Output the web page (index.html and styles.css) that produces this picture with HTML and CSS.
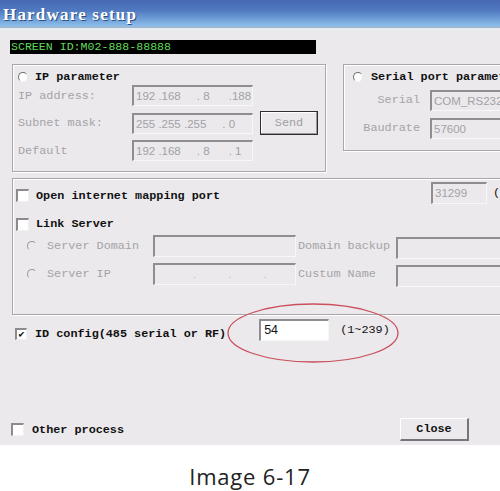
FILE: index.html
```html
<!DOCTYPE html>
<html lang="en">
<head>
    <meta charset="UTF-8">
    <meta name="viewport" content="width=device-width, initial-scale=1.0">
    <title>Hardware setup</title>
    <link rel="stylesheet" href="styles.css">
</head>
<body>
    <div class="window">
        <div class="titlebar">Hardware setup</div>

        <div class="screen-id">SCREEN ID:M02-888-88888</div>

        <!-- IP / serial section -->
        <div class="top-row">
            <div class="group ip-group">
                <div class="group-head"><span class="radio"></span>IP parameter</div>
                <div class="ip-fields">
                    <span class="label">IP address:</span>
                    <span class="field">192 .168     . 8      .188</span>
                    <span></span>
                    <span class="label">Subnet mask:</span>
                    <span class="field">255 .255 .255     . 0</span>
                    <span class="btn send">Send</span>
                    <span class="label">Default</span>
                    <span class="field">192 .168     . 8      . 1</span>
                    <span></span>
                </div>
            </div>
            <div class="group serial-group">
                <div class="group-head"><span class="radio"></span>Serial port parameter</div>
                <div class="serial-fields">
                    <span class="label">Serial</span>
                    <span class="field">COM_RS232</span>
                    <span class="label">Baudrate</span>
                    <span class="field">57600</span>
                </div>
            </div>
        </div>

        <!-- Server section -->
        <div class="group server-group">
            <div class="map-row">
                <span class="check"></span>
                <span class="check-text">Open internet mapping port</span>
                <span class="field port">31299</span>
                <span class="paren">(</span>
            </div>
            <div class="link-row">
                <span class="check"></span>
                <span class="check-text">Link Server</span>
            </div>
            <div class="server-fields">
                <span class="opt"><span class="radio off"></span>Server Domain</span>
                <span class="field"></span>
                <span class="label">Domain backup</span>
                <span class="field low"></span>
                <span class="opt"><span class="radio off"></span>Server IP</span>
                <span class="field dots">.          .          .</span>
                <span class="label">Custum Name</span>
                <span class="field low"></span>
            </div>
        </div>

        <!-- ID config -->
        <div class="id-row">
            <span class="check on">&#10004;</span>
            <span class="check-text">ID config(485 serial or RF)</span>
            <span class="field id-input">54</span>
            <span class="range">(1~239)</span>
        </div>

        <div class="bottom-row">
            <div class="other">
                <span class="check"></span>
                <span class="check-text">Other process</span>
            </div>
            <span class="btn close">Close</span>
        </div>
    </div>

    <div class="caption">Image 6-17</div>

    <svg class="mark" width="500" height="491">
        <ellipse cx="313" cy="333" rx="85" ry="29" fill="none" stroke="#c9505c" stroke-width="1.3"/>
    </svg>
</body>
</html>
```

FILE: styles.css
```css
* {
    box-sizing: border-box;
}

body {
    margin: 0;
    width: 500px;
    height: 491px;
    overflow: hidden;
    position: relative;
    background: #fff;
    font-family: "Liberation Mono", "DejaVu Sans Mono", monospace;
    font-size: 11.8px;
    color: #111;
}

.window {
    background: #ebe9ec;
    height: 445px;
    overflow: hidden;
}

.titlebar {
    height: 30px;
    padding: 5px 0 0 3px;
    background: linear-gradient(#4668b2 0, #5079c0 35%, #77a7dc 70%, #8fc0ea 88%, #8a9cb0 91%, #e2e9f4 93%, #eceef4 100%);
    color: #fff;
    font-family: "Liberation Serif", serif;
    font-weight: bold;
    font-size: 17px;
    letter-spacing: 1.2px;
    text-shadow: 1px 1px 0 #2c4d86;
}

.screen-id {
    margin: 10px 0 0 10px;
    width: 306px;
    height: 14px;
    background: #000;
    color: #5fdc5a;
    font-size: 11.6px;
    line-height: 14px;
    padding-left: 1px;
}

.top-row {
    display: flex;
    align-items: flex-start;
    margin-top: 10px;
    padding-left: 12px;
}

.group {
    border: 1px solid #a9a7ab;
    box-shadow: inset 1px 1px 0 #fff, 1px 1px 0 #fff;
    flex: none;
}

.group-head {
    display: flex;
    align-items: center;
    height: 11px;
    font-weight: bold;
}

.label {
    color: #a5a3a7;
}

.field {
    display: block;
    height: 21px;
    border-style: solid;
    border-width: 2px 1px 1px 2px;
    border-color: #8f8d91 #f7f7f7 #f7f7f7 #8f8d91;
    font-family: "Liberation Sans", Arial, sans-serif;
    font-size: 11.5px;
    line-height: 18px;
    padding-left: 2px;
    color: #a3a1a5;
    white-space: pre;
    overflow: hidden;
}

.radio {
    display: inline-block;
    width: 10px;
    height: 10px;
    border-radius: 50%;
    border: 1.5px solid;
    border-color: #6f6f6f #e6e6e6 #f4f4f4 #6f6f6f;
    background: #fff;
    flex: none;
}

.radio.off {
    border-color: #9a989c transparent transparent #9a989c;
    background: transparent;
}

.check {
    display: inline-block;
    width: 13px;
    height: 13px;
    border-style: solid;
    border-width: 2px 1px 1px 2px;
    border-color: #8c8a8e #f0f0f0 #f0f0f0 #8c8a8e;
    background: #fff;
    font-size: 10px;
    line-height: 10px;
    text-align: center;
    color: #000;
    flex: none;
}

.check-text {
    font-weight: bold;
    margin-left: 7px;
    white-space: nowrap;
}

.btn {
    display: flex;
    align-items: center;
    justify-content: center;
}

/* IP parameter box */
.ip-group {
    width: 314px;
    height: 108px;
    padding: 6px 0 0 5px;
}

.ip-group .radio {
    margin-right: 7px;
}

.ip-fields {
    display: grid;
    grid-template-columns: 107px 121px 58px;
    grid-auto-rows: 21px;
    column-gap: 7px;
    row-gap: 6.5px;
    margin-top: 3px;
    align-items: center;
}

.send {
    height: 24px;
    border: 1px solid #2e2e2e;
    box-shadow: inset -1px -1px 0 #9a989c, inset 1px 1px 0 #fff;
    color: #a09ea2;
}

/* serial box */
.serial-group {
    margin-left: 17px;
    width: 200px;
    height: 87px;
    padding: 6px 0 0 9px;
    white-space: nowrap;
}

.serial-group .radio {
    margin-right: 8px;
}

.serial-fields {
    display: grid;
    grid-template-columns: 67px 90px;
    grid-auto-rows: 20px;
    column-gap: 10px;
    row-gap: 8px;
    margin-top: 8px;
    align-items: center;
}

.serial-fields .label {
    text-align: right;
}

/* server box */
.server-group {
    margin: 6px 0 0 12px;
    width: 520px;
    height: 137px;
    padding: 2px 0 0 3px;
}

.map-row {
    display: flex;
    align-items: center;
    height: 23px;
}

.map-row .check,
.map-row .check-text {
    margin-top: 6px;
}

.port {
    margin-left: 211px;
    width: 56px;
    height: 22px;
    flex: none;
}

.paren {
    margin-left: 6px;
}

.link-row {
    display: flex;
    align-items: center;
    margin-top: 13px;
}

.server-fields {
    display: grid;
    grid-template-columns: 137px 143px 100px 110px;
    grid-auto-rows: 22px;
    row-gap: 6px;
    margin-top: 4px;
    align-items: center;
}

.opt {
    display: flex;
    align-items: center;
    padding-left: 11px;
    color: #a5a3a7;
}

.opt .radio {
    margin-right: 10px;
}

.server-fields .field {
    height: 22px;
}

.server-fields .label {
    padding-left: 2px;
}

.server-fields .field.low {
    margin-top: 4px;
}

.dots {
    padding-left: 38px;
    color: #c4c2c6;
}

/* ID config */
.id-row {
    display: flex;
    align-items: center;
    margin-top: 4px;
    padding-left: 15px;
    height: 22px;
}

.id-row .check {
    width: 12px;
    height: 12px;
    margin-top: 8px;
}

.id-row .check-text {
    margin-top: 8px;
    margin-left: 8px;
}

.id-input {
    margin-left: 33px;
    width: 70px;
    height: 22px;
    background: #fff;
    color: #111;
    font-size: 12.5px;
    padding-left: 3px;
}

.range {
    margin-left: 11px;
}

/* bottom */
.bottom-row {
    display: flex;
    align-items: center;
    justify-content: space-between;
    margin-top: 77px;
    padding: 0 31px 0 11px;
    height: 23px;
}

.other {
    display: flex;
    align-items: center;
}

.other .check-text {
    margin-left: 8px;
}

.close {
    width: 69px;
    height: 23px;
    border-style: solid;
    border-width: 1px 2px 2px 1px;
    border-color: #fff #77757a #77757a #fff;
    font-weight: bold;
}

.caption {
    height: 46px;
    padding-top: 18px;
    text-align: center;
    font-family: "Open Sans", sans-serif;
    font-size: 22px;
    line-height: 26px;
    letter-spacing: 0.8px;
    color: #222;
}

.mark {
    position: absolute;
    left: 0;
    top: 0;
    pointer-events: none;
}
```
